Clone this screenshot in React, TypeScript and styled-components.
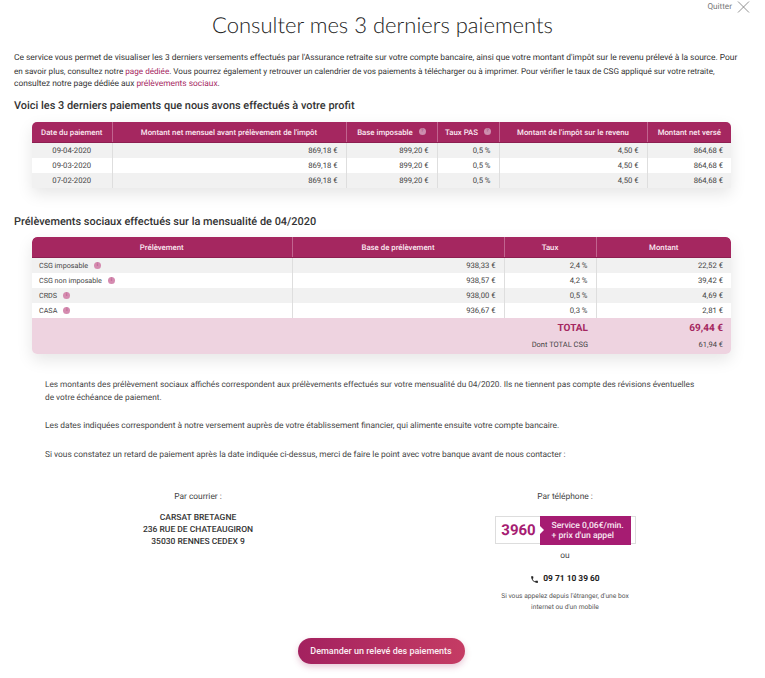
import React from "react";
import styled, { createGlobalStyle } from "styled-components";

const Global = createGlobalStyle`
  html, body { margin: 0; padding: 0; background: #fff; }
  body { font-family: Roboto, "Liberation Sans", sans-serif; color: #333; text-rendering: geometricPrecision; }
  * { box-sizing: border-box; }
`;

const Page = styled.main`
  position: relative;
  width: 765px;
  height: 678px;
  overflow: hidden;
  padding: 0 14px;
`;

const Quit = styled.a`
  position: absolute;
  top: 1px;
  right: 15px;
  display: flex;
  align-items: center;
  gap: 5px;
  font-size: 8.2px;
  color: #777;
  svg { display: block; }
`;

const Title = styled.h1`
  margin: 0;
  padding-top: 10px;
  height: 52px;
  text-align: center;
  font-family: Lato, sans-serif;
  font-weight: 300;
  font-size: 22px;
  line-height: 30px;
  color: #222;
`;

const Intro = styled.p`
  margin: 0;
  line-height: 12.8px;
  color: #333;
  a { color: #a6275f; }
`;

const IntroLine = styled.span<{ $size: number }>`
  display: block;
  white-space: nowrap;
  font-size: ${(p) => p.$size}px;
`;

const SectionTitle = styled.h2<{ $top: number; $bottom: number }>`
  margin: ${(p) => p.$top}px 0 ${(p) => p.$bottom}px;
  font-size: 10.95px;
  line-height: 14px;
  font-weight: 500;
  color: #333;
`;

const TableCard = styled.div`
  margin-left: 18px;
  width: 699px;
  border-radius: 5px 5px 0 0;
  box-shadow: 0 6px 16px rgba(0, 0, 0, 0.1);
`;

const SocialCard = styled(TableCard)`
  border-radius: 5px;
  overflow: hidden;
`;

const Table = styled.table`
  width: 100%;
  table-layout: fixed;
  border-collapse: collapse;
  font-size: 7.7px;
`;

const HeadRow = styled.tr<{ $height: number }>`
  background: #a52760;
  height: ${(p) => p.$height}px;
`;

const Head = styled.th`
  padding: 0;
  color: #fbe9f1;
  font-weight: 500;
  font-size: 7.8px;
  text-align: center;
  border-right: 1px solid #c1648f;
  border-bottom: 1px solid #8d1f51;
  &:first-child { border-top-left-radius: 5px; }
  &:last-child { border-right: 0; border-top-right-radius: 5px; }
`;

const Row = styled.tr<{ $odd: boolean }>`
  height: 15px;
  background: ${(p) => (p.$odd ? "#f1f1f1" : "#fff")};
`;

const Cell = styled.td<{ $align?: string }>`
  padding: 0 8px;
  line-height: 15px;
  color: #444;
  text-align: ${(p) => p.$align || "right"};
  border-right: 1px solid #dedede;
  &:last-child { border-right: 0; }
`;

const NameCell = styled(Cell)`
  padding-left: 7px;
  font-size: 7.2px;
`;

const Info = styled.span`
  display: inline-block;
  overflow: hidden;
  width: 7px;
  height: 7px;
  margin-left: 6px;
  border-radius: 50%;
  background: #d58bb0;
  color: #b9638f;
  font-size: 5px;
  font-weight: 700;
  line-height: 7px;
  text-align: center;
  vertical-align: -0.5px;
`;

const HeadInfo = styled(Info)`
  background: #cd8eae;
  color: #a85d85;
`;

const Totals = styled.div`
  height: 36px;
  background: #eed3e0;
  padding: 2px 8px 0 0;
  display: grid;
  grid-template-columns: 1fr 127px;
  grid-template-rows: 17px 15px;
  align-items: center;
  text-align: right;
`;

const TotalLabel = styled.strong<{ $end?: boolean }>`
  padding-right: ${(p) => (p.$end ? 0 : 8)}px;
  font-size: 10px;
  font-weight: 700;
  color: #a52760;
`;

const SubLabel = styled.span<{ $end?: boolean }>`
  padding-right: ${(p) => (p.$end ? 0 : 8)}px;
  font-size: 7.5px;
  color: #444;
`;

const Notes = styled.section`
  margin: 25px 0 0 31px;
  width: 655px;
  font-size: 8.4px;
  line-height: 12.5px;
  color: #444;
`;

const Note = styled.p<{ $size?: number }>`
  margin: 0 0 16px;
  font-size: ${(p) => p.$size ?? 8.4}px;
  white-space: nowrap;
`;

const NoteLine = styled.span`
  display: block;
`;

const Contacts = styled.section`
  display: grid;
  grid-template-columns: 368px 366px;
  margin-top: 30px;
  text-align: center;
  font-size: 8.4px;
  color: #444;
`;

const ContactBlock = styled.div`
  display: flex;
  flex-direction: column;
  align-items: center;
`;

const Label = styled.div`
  line-height: 13px;
`;

const Address = styled.address`
  margin-top: 8px;
  font-style: normal;
  font-weight: 500;
  font-size: 8.5px;
  line-height: 12px;
  color: #333;
`;

const Badge = styled.div`
  margin-top: 12px;
  width: 141px;
  height: 28px;
  border: 1px solid #ddd;
  display: flex;
  align-items: stretch;
`;

const BadgeNumber = styled.div`
  width: 44px;
  padding-left: 2px;
  display: flex;
  align-items: center;
  justify-content: center;
  font-size: 15px;
  font-weight: 700;
  color: #a61c72;
`;

const BadgeText = styled.div`
  position: relative;
  margin: -1px 0;
  width: 91px;
  height: 29px;
  background: #a61c72;
  color: #f9e8f2;
  font-size: 8.6px;
  line-height: 10px;
  font-weight: 500;
  text-align: left;
  padding: 5px 0 0 12px;
  &::before {
    content: "";
    position: absolute;
    left: 0;
    top: 10px;
    border-left: 4px solid #fff;
    border-top: 4px solid transparent;
    border-bottom: 4px solid transparent;
  }
`;

const Or = styled.div`
  margin-top: 6px;
  line-height: 13px;
`;

const Phone = styled.div`
  margin-top: 10px;
  display: flex;
  align-items: center;
  gap: 4px;
  font-size: 8.4px;
  line-height: 13px;
  font-weight: 700;
  color: #222;
`;

const Small = styled.div`
  margin-top: 5px;
  width: 140px;
  font-size: 6.7px;
  line-height: 10.5px;
  color: #555;
`;

const Cta = styled.div`
  display: flex;
  justify-content: center;
  margin-top: 26px;
  padding-right: 3px;
`;

const CtaButton = styled.button`
  width: 167px;
  height: 26px;
  border: 0;
  border-radius: 13px;
  background: linear-gradient(90deg, #a3215f, #c53c64);
  box-shadow: 0 3px 6px rgba(165, 39, 96, 0.25);
  color: #fbeef3;
  font-family: inherit;
  font-size: 9px;
  font-weight: 500;
`;

const payments = [
  ["09-04-2020", "869,18 €", "899,20 €", "0,5 %", "4,50 €", "864,68 €"],
  ["09-03-2020", "869,18 €", "899,20 €", "0,5 %", "4,50 €", "864,68 €"],
  ["07-02-2020", "869,18 €", "899,20 €", "0,5 %", "4,50 €", "864,68 €"],
];

const social = [
  ["CSG imposable", "938,33 €", "2,4 %", "22,52 €"],
  ["CSG non imposable", "938,57 €", "4,2 %", "39,42 €"],
  ["CRDS", "938,00 €", "0,5 %", "4,69 €"],
  ["CASA", "936,67 €", "0,3 %", "2,81 €"],
];

export default function App() {
  return (
    <Page>
      <Global />
      <Quit>
        Quitter
        <svg width="13" height="12" viewBox="0 0 13 12" fill="none" stroke="#777" strokeWidth="0.8">
          <path d="M1 .5l11 11M12 .5L1 11.5" />
        </svg>
      </Quit>
      <Title>Consulter mes 3 derniers paiements</Title>
      <Intro>
        <IntroLine $size={8.42}>Ce service vous permet de visualiser les 3 derniers versements effectués par l'Assurance retraite sur votre compte bancaire, ainsi que votre montant d'impôt sur le revenu prélevé à la source. Pour</IntroLine>
        <IntroLine $size={8.13}>en savoir plus, consultez notre <a>page dédiée</a>. Vous pourrez également y retrouver un calendrier de vos paiements à télécharger ou à imprimer. Pour vérifier le taux de CSG appliqué sur votre retraite,</IntroLine>
        <IntroLine $size={8.38}>consultez notre page dédiée aux <a>prélèvements sociaux</a>.</IntroLine>
      </Intro>
      <SectionTitle $top={9} $bottom={9}>Voici les 3 derniers paiements que nous avons effectués à votre profit</SectionTitle>
      <TableCard>
        <Table>
          <colgroup>
            <col width="80" />
            <col width="234" />
            <col width="91" />
            <col width="62" />
            <col width="148" />
            <col width="84" />
          </colgroup>
          <thead>
            <HeadRow $height={20}>
              <Head>Date du paiement</Head>
              <Head>Montant net mensuel avant prélèvement de l'impôt</Head>
              <Head>Base imposable<HeadInfo>?</HeadInfo></Head>
              <Head>Taux PAS<HeadInfo>?</HeadInfo></Head>
              <Head>Montant de l'impôt sur le revenu</Head>
              <Head>Montant net versé</Head>
            </HeadRow>
          </thead>
          <tbody>
            {payments.map((r, i) => (
              <Row key={i} $odd={i % 2 === 0}>
                {r.map((c, j) => (
                  <Cell key={j} $align={j === 0 ? "center" : "right"}>{c}</Cell>
                ))}
              </Row>
            ))}
          </tbody>
        </Table>
      </TableCard>
      <SectionTitle $top={27} $bottom={8}>Prélèvements sociaux effectués sur la mensualité de 04/2020</SectionTitle>
      <SocialCard>
        <Table>
          <colgroup>
            <col width="260" />
            <col width="212" />
            <col width="92" />
            <col width="135" />
          </colgroup>
          <thead>
            <HeadRow $height={21}>
              <Head>Prélèvement</Head>
              <Head>Base de prélèvement</Head>
              <Head>Taux</Head>
              <Head>Montant</Head>
            </HeadRow>
          </thead>
          <tbody>
            {social.map((r, i) => (
              <Row key={i} $odd={i % 2 === 0}>
                <NameCell $align="left">{r[0]}<Info>i</Info></NameCell>
                <Cell>{r[1]}</Cell>
                <Cell>{r[2]}</Cell>
                <Cell>{r[3]}</Cell>
              </Row>
            ))}
          </tbody>
        </Table>
        <Totals>
          <TotalLabel>TOTAL</TotalLabel>
          <TotalLabel $end>69,44 €</TotalLabel>
          <SubLabel>Dont TOTAL CSG</SubLabel>
          <SubLabel $end>61,94 €</SubLabel>
        </Totals>
      </SocialCard>
      <Notes>
        <Note $size={8.25}>
          <NoteLine>Les montants des prélèvement sociaux affichés correspondent aux prélèvements effectués sur votre mensualité du 04/2020. Ils ne tiennent pas compte des révisions éventuelles</NoteLine>
          <NoteLine>de votre échéance de paiement.</NoteLine>
        </Note>
        <Note>Les dates indiquées correspondent à notre versement auprès de votre établissement financier, qui alimente ensuite votre compte bancaire.</Note>
        <Note>Si vous constatez un retard de paiement après la date indiquée ci-dessus, merci de faire le point avec votre banque avant de nous contacter :</Note>
      </Notes>
      <Contacts>
        <ContactBlock>
          <Label>Par courrier :</Label>
          <Address>CARSAT BRETAGNE<br />236 RUE DE CHATEAUGIRON<br />35030 RENNES CEDEX 9</Address>
        </ContactBlock>
        <ContactBlock>
          <Label>Par téléphone :</Label>
          <Badge>
            <BadgeNumber>3960</BadgeNumber>
            <BadgeText>Service 0,06€/min.<br />+ prix d'un appel</BadgeText>
          </Badge>
          <Or>ou</Or>
          <Phone>
            <svg width="9" height="9" viewBox="0 0 24 24" fill="#222">
              <path d="M6.6 10.8c1.4 2.8 3.8 5.1 6.6 6.6l2.2-2.2c.3-.3.7-.4 1-.2 1.1.4 2.3.6 3.6.6.6 0 1 .4 1 1V20c0 .6-.4 1-1 1C10.6 21 3 13.4 3 4c0-.6.4-1 1-1h3.5c.6 0 1 .4 1 1 0 1.3.2 2.5.6 3.6.1.3 0 .7-.2 1z" />
            </svg>
            09 71 10 39 60
          </Phone>
          <Small>Si vous appelez depuis l'étranger, d'une box internet ou d'un mobile</Small>
        </ContactBlock>
      </Contacts>
      <Cta>
        <CtaButton>Demander un relevé des paiements</CtaButton>
      </Cta>
    </Page>
  );
}
